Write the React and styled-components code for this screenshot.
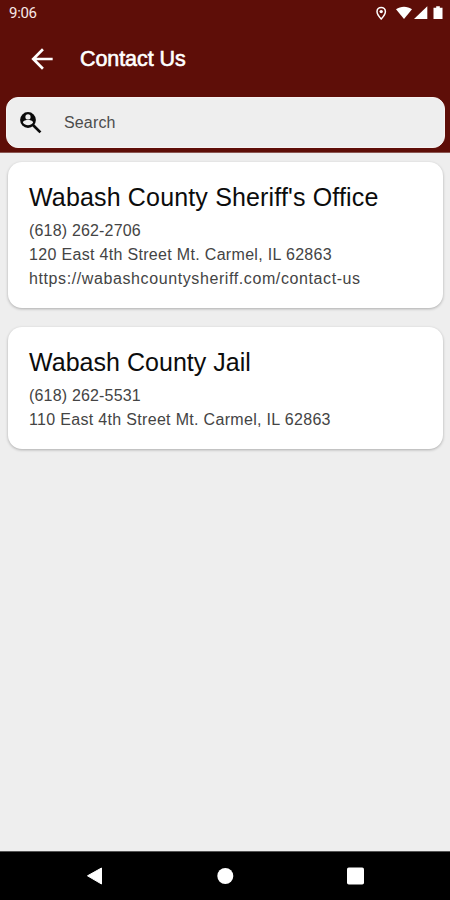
import styled, { createGlobalStyle } from "styled-components"
import { MdArrowBack } from "react-icons/md"

const GlobalStyle = createGlobalStyle`
    * {
        box-sizing: border-box;
    }
    body {
        margin: 0;
        background: #eeeeee;
        font-family: "Liberation Sans", Arial, sans-serif;
    }
`
const Wrapper = styled.div`
    display: flex;
    flex-direction: column;
    width: 450px;
    height: 900px;
    overflow: hidden;
    background: #eeeeee;
`
const Head = styled.header`
    height: 153px;
    flex-shrink: 0;
    background: #5e0e08;
    border-bottom: 1px solid #8b5652;
    color: #fff;
`
const StatusBar = styled.div`
    display: flex;
    align-items: center;
    justify-content: space-between;
    height: 26px;
    padding: 0 6px 0 9px;
`
const Clock = styled.span`
    font-family: Roboto, sans-serif;
    font-size: 15px;
    line-height: 26px;
    letter-spacing: -0.3px;
    color: #f7e9e7;
`
const TitleBar = styled.div`
    display: flex;
    align-items: center;
    height: 66px;
    padding-left: 26px;
    gap: 22px;

    svg {
        display: block;
    }
`
const Title = styled.h1`
    margin: 0;
    font-size: 21.5px;
    font-weight: 400;
    line-height: 26px;
    letter-spacing: -0.08px;
    -webkit-text-stroke: 0.6px #fff;
`
const SearchBox = styled.label`
    display: flex;
    align-items: center;
    height: 51px;
    margin: 5px 5px 0 6px;
    padding-left: 12px;
    gap: 21px;
    border-radius: 12px;
    background: #eeeeee;
    border: 1px solid #f8f3f2;
`
const SearchText = styled.span`
    font-size: 16px;
    line-height: 20px;
    letter-spacing: 0.15px;
    color: #4c4c4c;
`
const Body = styled.main`
    display: flex;
    flex-direction: column;
    flex: 1;
    gap: 19px;
    padding: 9px 7px 0 8px;
`
const Card = styled.article`
    padding: 20px 21px 17px;
    border-radius: 14px;
    background: #fff;
    box-shadow: 0 1px 3px rgba(0, 0, 0, 0.28);
`
const Name = styled.h2`
    margin: 0 0 6px;
    padding-top: ${(props) => props.$top || "0"};
    font-size: 25px;
    font-weight: 400;
    line-height: 31px;
    letter-spacing: ${(props) => props.$spacing};
    white-space: nowrap;
    color: #0c0c0c;
`
const Line = styled.p`
    margin: 0;
    font-size: 16px;
    line-height: 24px;
    letter-spacing: ${(props) => props.$spacing || "0.34px"};
    white-space: nowrap;
    color: #444;
`
const NavBar = styled.nav`
    display: flex;
    align-items: center;
    justify-content: space-between;
    height: 49px;
    padding: 0 85px;
    background: #000;
    border-top: 1px solid #555;
`

const contacts = [
    {
        name: "Wabash County Sheriff's Office",
        nameSpacing: "0.16px",
        phone: "(618) 262-2706",
        address: "120 East 4th Street Mt. Carmel, IL 62863",
        site: "https://wabashcountysheriff.com/contact-us",
    },
    {
        name: "Wabash County Jail",
        nameSpacing: "0.03px",
        phone: "(618) 262-5531",
        address: "110 East 4th Street Mt. Carmel, IL 62863",
    },
]

function StatusIcons () {
    return(
        <svg width="70" height="18" viewBox="0 0 70 18" fill="#fff">
            <path d="M7.2 3.4a4.2 4.2 0 0 0-4.2 4.2c0 3 4.2 7.4 4.2 7.4s4.2-4.4 4.2-7.4a4.2 4.2 0 0 0-4.2-4.2z" fill="none" stroke="#fff" strokeWidth="1.5" />
            <circle cx="7.2" cy="7.6" r="1.7" />
            <path d="M22 5.2C26.5 1.8 33.5 1.8 38 5.2L30 15z" />
            <path d="M53.3 2.3V15H40z" />
            <path d="M62.2 3.8v-1.5h3.6v1.5h2.7V15h-9V3.8z" />
        </svg>
    )
}

function PersonSearchIcon () {
    return(
        <svg width="24" height="24" viewBox="0 0 24 24">
            <path d="M13.5 13.5L21.4 21.4" stroke="#0a0a0a" strokeWidth="2.7" />
            <circle cx="9" cy="9" r="7.9" fill="#0a0a0a" />
            <circle cx="9" cy="5.9" r="2.6" fill="#eee" />
            <path d="M3.9 11.4c.3-1.8 3.4-2.4 5.1-2.4s4.8.6 5.1 2.4a6.1 6.1 0 0 1-10.2 0z" fill="#eee" />
        </svg>
    )
}

export default function ContactPage () {
    return(
        <Wrapper>
            <GlobalStyle/>
            <Head>
                <StatusBar>
                    <Clock>9:06</Clock>
                    <StatusIcons/>
                </StatusBar>
                <TitleBar>
                    <MdArrowBack size={32}/>
                    <Title>Contact Us</Title>
                </TitleBar>
                <SearchBox>
                    <PersonSearchIcon/>
                    <SearchText>Search</SearchText>
                </SearchBox>
            </Head>
            <Body>
                {contacts.map((contact) => (
                    <Card key={contact.name}>
                        <Name $spacing={contact.nameSpacing}>{contact.name}</Name>
                        <Line $spacing="0.18px">{contact.phone}</Line>
                        <Line $spacing="0.32px">{contact.address}</Line>
                        {contact.site && <Line $spacing="0.6px">{contact.site}</Line>}
                    </Card>
                ))}
            </Body>
            <NavBar>
                <svg width="20" height="20" viewBox="0 0 20 20">
                    <path d="M2.5 9.8L16.5 2v16z" fill="#fff" stroke="#fff" strokeLinejoin="round" />
                </svg>
                <svg width="20" height="20" viewBox="0 0 20 20">
                    <circle cx="10.3" cy="10" r="8" fill="#fff" />
                </svg>
                <svg width="20" height="20" viewBox="0 0 20 20">
                    <rect x="2" y="1.5" width="17" height="17" rx="1.8" fill="#fff" />
                </svg>
            </NavBar>
        </Wrapper>
    )
}
